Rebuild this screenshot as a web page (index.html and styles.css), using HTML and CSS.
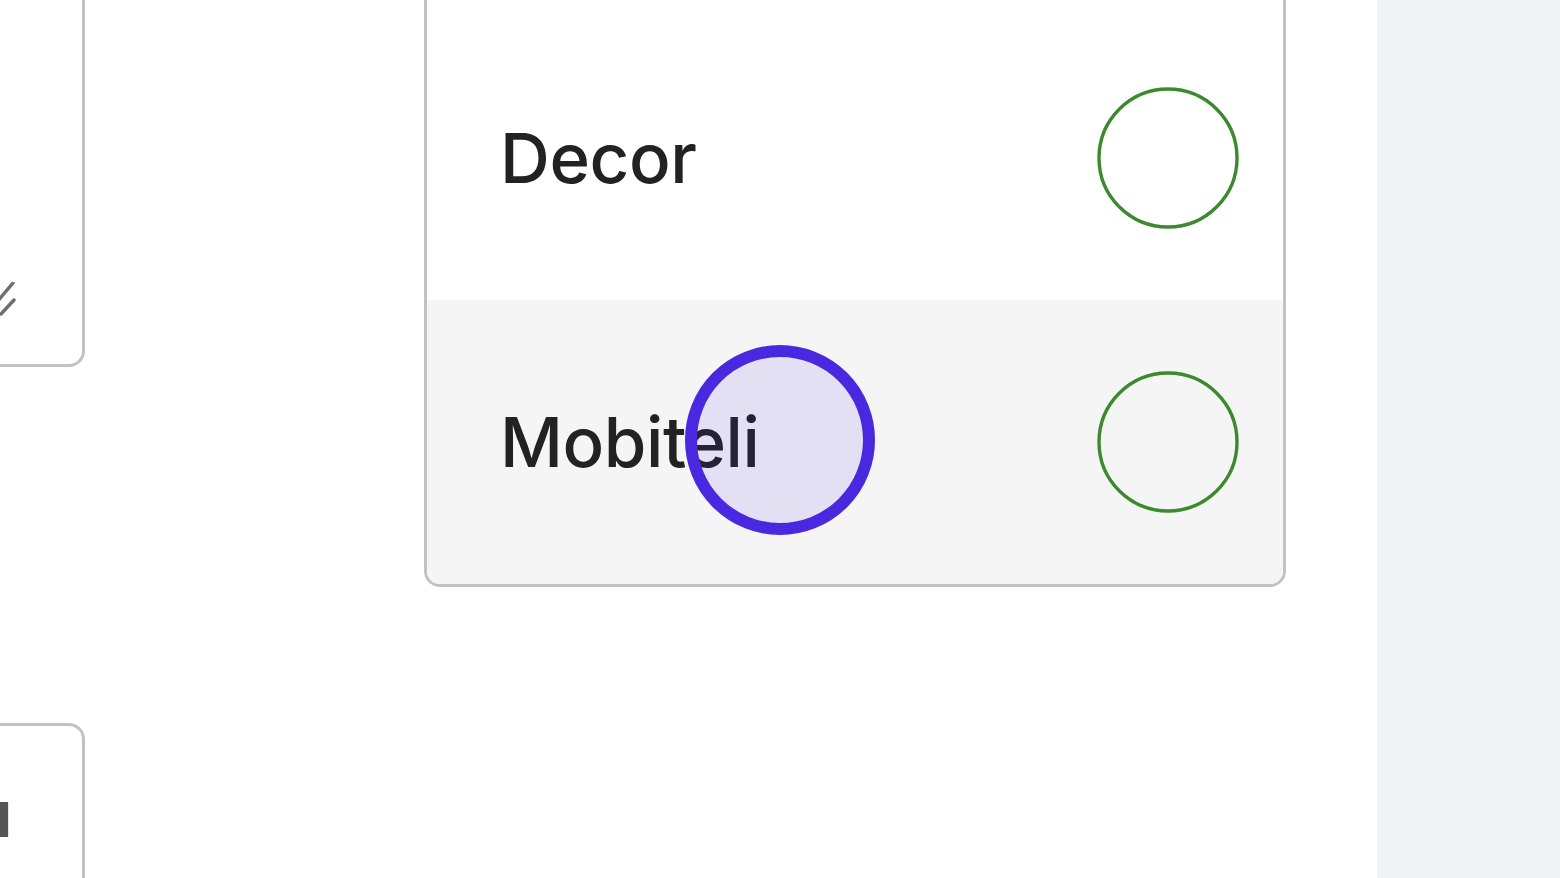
FILE: index.html
```html
<!DOCTYPE html>
<html lang="hr">
<head>
  <meta charset="UTF-8" />
  <meta name="viewport" content="width=device-width, initial-scale=1.0" />
  <title>Kategorije</title>
  <link rel="stylesheet" href="styles.css">
</head>
<body>
  <div class="page">
    <div class="left">
      <div class="card note">
        <svg class="grip" width="20" height="34" viewBox="0 0 20 34">
          <line x1="16" y1="1" x2="0" y2="20" />
          <line x1="17" y1="18" x2="4" y2="32" />
        </svg>
      </div>
      <div class="card menu">
        <span class="menu-label">Kategoriju</span>
      </div>
    </div>

    <div class="main">
      <ul class="options">
        <li class="option">
          <span class="label">Decor</span>
          <svg class="radio" width="142" height="142" viewBox="0 0 142 142"><circle cx="71" cy="71" r="69" /></svg>
        </li>
        <li class="option hover">
          <span class="label">Mobiteli</span>
          <svg class="radio" width="142" height="142" viewBox="0 0 142 142"><circle cx="71" cy="71" r="69" /></svg>
          <span class="cursor"></span>
        </li>
      </ul>
    </div>

    <div class="sidebar"></div>
  </div>
</body>
</html>
```

FILE: styles.css
```css
* { box-sizing: border-box; margin: 0; padding: 0; }
html, body { height: 100%; }
body { font-family: Inter, "Noto Sans", sans-serif; background: #fff; overflow: hidden; }

.page { display: flex; height: 878px; overflow: hidden; }

.left { width: 85px; flex: none; display: flex; flex-direction: column; gap: 356px; }
.card { width: 400px; margin-left: -315px; border: 3px solid #c2c2c2; border-radius: 16px; background: #fff; flex: none; }
.note { height: 467px; margin-top: -100px; display: flex; justify-content: flex-end; align-items: flex-end; padding: 0 65px 48px 0; }
.grip line { stroke: #6e6e6e; stroke-width: 3.4; stroke-linecap: round; }
.menu { height: 300px; display: flex; justify-content: flex-end; align-items: flex-start; padding: 46px 70px 0 0; }
.menu-label { font-size: 64px; font-weight: 700; color: #555; line-height: 1.3; }

.main { flex: 1; padding-left: 339px; }
.options { list-style: none; width: 862px; margin-top: -100px; padding-top: 113px; border: 3px solid #c2c2c2; border-radius: 16px; overflow: hidden; background: #fff; }
.option { position: relative; height: 284px; display: flex; align-items: center; justify-content: space-between; padding: 0 44px 0 73px; }
.option.hover { background: #f5f5f5; }
.label { font-size: 69px; font-weight: 500; color: #222; letter-spacing: -0.4px; }
.radio { flex: none; }
.radio circle { fill: none; stroke: #3b8a2c; stroke-width: 3.4; }

.cursor { position: absolute; left: 258px; top: 45px; width: 190px; height: 190px; border: 12px solid #4a28e0; border-radius: 50%; background: rgba(74, 40, 224, 0.1); }

.sidebar { width: 183px; flex: none; background: #f0f2f6; }
```
